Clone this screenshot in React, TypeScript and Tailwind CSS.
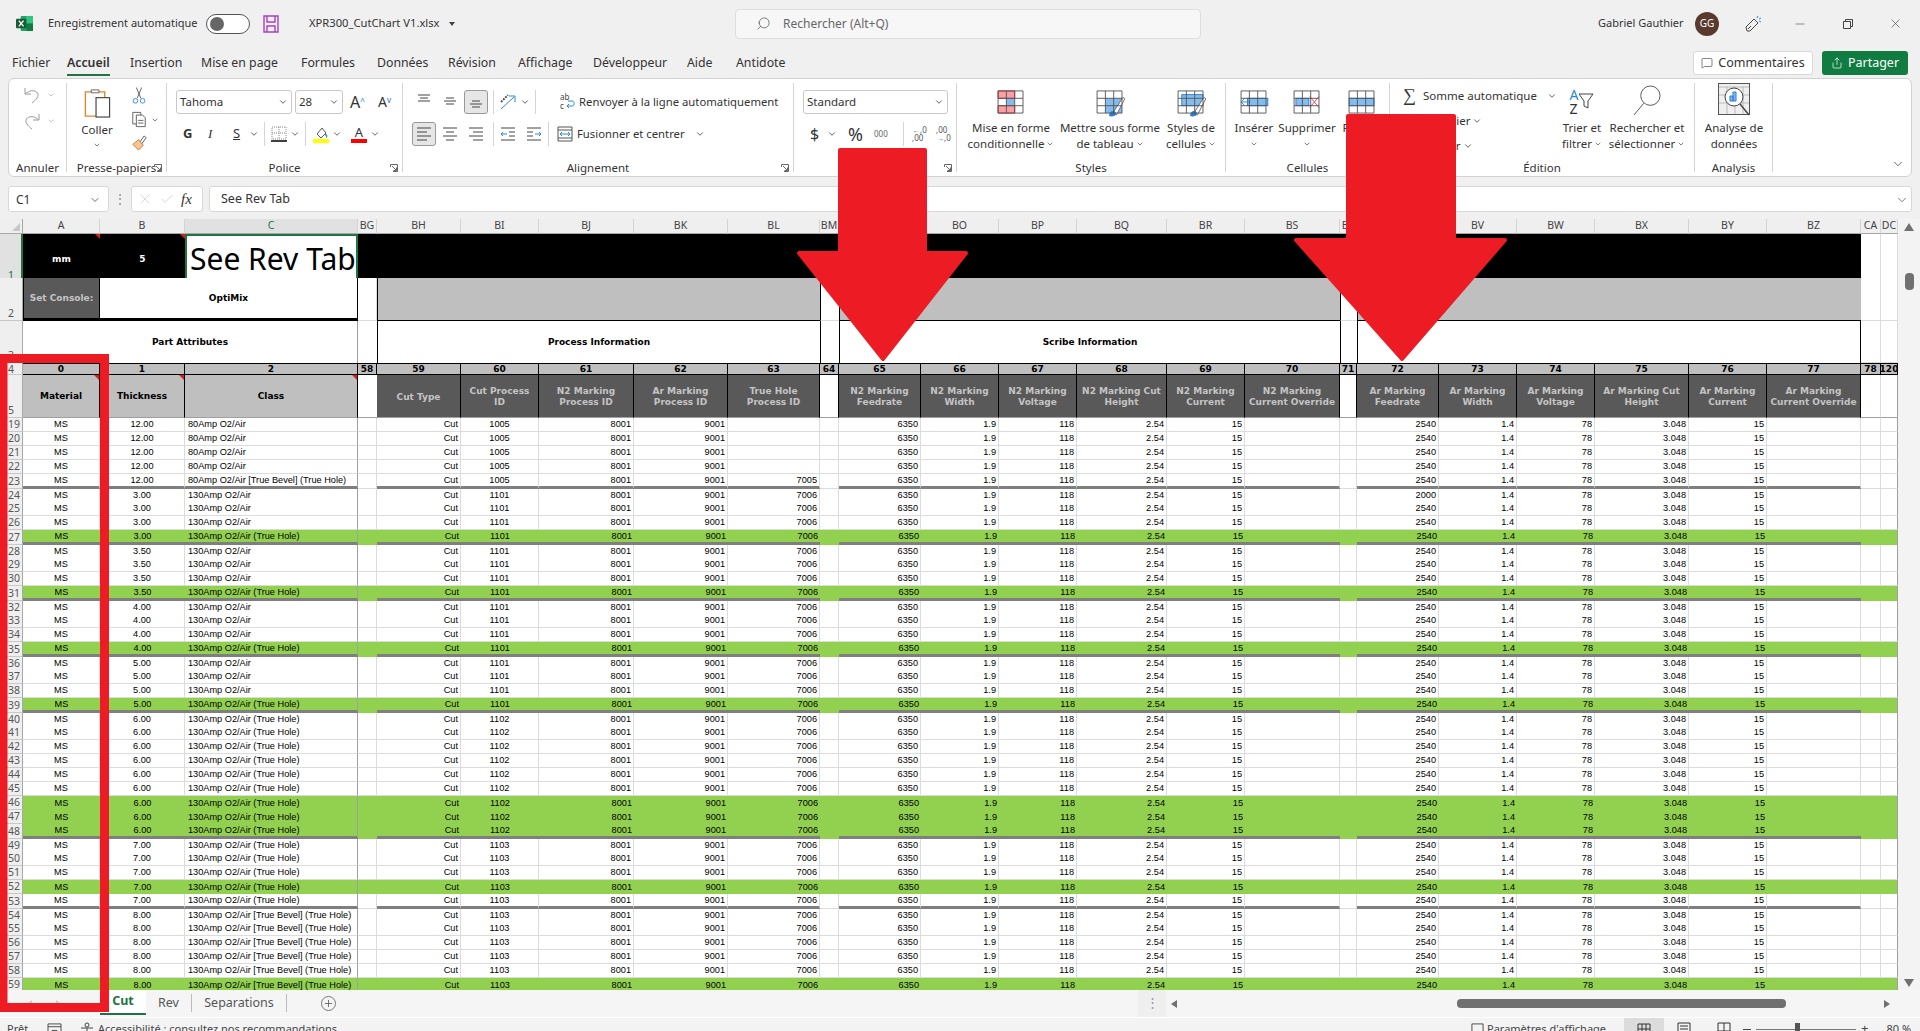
import { ChevronDown, Minus, Search, X, Check, MessageSquare, Share, Plus } from "lucide-react";
import type { ReactNode } from "react";

const GRID =
  "grid grid-cols-[23px_77px_85px_173px_19px_84px_78px_95px_94px_92px_19px_82px_78px_78px_90px_78px_95px_17px_82px_78px_78px_94px_78px_94px_20px_17px]";

const LETTERS = ["A", "B", "C", "BG", "BH", "BI", "BJ", "BK", "BL", "BM", "BN", "BO", "BP", "BQ", "BR", "BS", "BT", "BU", "BV", "BW", "BX", "BY", "BZ", "CA", "DC"];
const NUMBERS = ["0", "1", "2", "58", "59", "60", "61", "62", "63", "64", "65", "66", "67", "68", "69", "70", "71", "72", "73", "74", "75", "76", "77", "78", "120"];
const TABS = [
  ["Fichier", "w-[55px]"],
  ["Accueil", "w-[63px]"],
  ["Insertion", "w-[71px]"],
  ["Mise en page", "w-[100px]"],
  ["Formules", "w-[76px]"],
  ["Données", "w-[71px]"],
  ["Révision", "w-[70px]"],
  ["Affichage", "w-[75px]"],
  ["Développeur", "w-[94px]"],
  ["Aide", "w-[49px]"],
  ["Antidote", "w-[50px]"],
];

const HEAD_DARK = [
  ["Cut Type"],
  ["Cut Process", "ID"],
  ["N2 Marking", "Process ID"],
  ["Ar Marking", "Process ID"],
  ["True Hole", "Process ID"],
  null,
  ["N2 Marking", "Feedrate"],
  ["N2 Marking", "Width"],
  ["N2 Marking", "Voltage"],
  ["N2 Marking Cut", "Height"],
  ["N2 Marking", "Current"],
  ["N2 Marking", "Current Override"],
  null,
  ["Ar Marking", "Feedrate"],
  ["Ar Marking", "Width"],
  ["Ar Marking", "Voltage"],
  ["Ar Marking Cut", "Height"],
  ["Ar Marking", "Current"],
  ["Ar Marking", "Current Override"],
];

const O2 = "130Amp O2/Air";
const HOLE = "130Amp O2/Air (True Hole)";
const BEVEL = "130Amp O2/Air [True Bevel] (True Hole)";

type Row = { n: number; t: string; c: string; id: string; hole: string; ar?: string };

const ROWS: Row[] = [];
for (let n = 19; n <= 59; n++) {
  if (n <= 23) ROWS.push({ n, t: "12.00", c: n === 23 ? "80Amp O2/Air [True Bevel] (True Hole)" : "80Amp O2/Air", id: "1005", hole: n === 23 ? "7005" : "" });
  else if (n <= 39) {
    const g = Math.floor((n - 24) / 4);
    ROWS.push({ n, t: ["3.00", "3.50", "4.00", "5.00"][g], c: (n - 24) % 4 === 3 ? HOLE : O2, id: "1101", hole: "7006", ar: n === 24 ? "2000" : "2540" });
  } else if (n <= 48) ROWS.push({ n, t: "6.00", c: HOLE, id: "1102", hole: "7006" });
  else if (n <= 53) ROWS.push({ n, t: "7.00", c: HOLE, id: "1103", hole: "7006" });
  else ROWS.push({ n, t: "8.00", c: BEVEL, id: "1103", hole: "7006" });
}

const GREEN = [27, 31, 35, 39, 46, 47, 48, 52, 59];
const THICK = [23, 27, 31, 35, 39, 48, 53];
const AFTER_THICK = [24, 28, 32, 36, 40, 49, 54, 59];

const Chev = ({ className = "" }: { className?: string }) => (
  <ChevronDown className={"w-[10px] h-[10px] text-[#444] shrink-0 " + className} strokeWidth={2} />
);

const Launcher = () => (
  <svg viewBox="0 0 10 10" className="absolute right-[3px] bottom-[-1px] w-[10px] h-[10px]" fill="none" stroke="#666">
    <path d="M1.5 4V1.5H8.5V8.5H4M3 3L7.5 7.5M7.5 4.5V7.5H4.5" />
  </svg>
);

function Group({ w, label, launcher, children }: { w: string; label: string; launcher?: boolean; children: ReactNode }) {
  return (
    <div className={"relative mt-[4px] h-[89px] flex flex-col border-r border-[#d4d4d4] shrink-0 " + w}>
      <div className="h-[77px] shrink-0 flex">{children}</div>
      <div className="h-[16px] leading-[16px] text-center text-[11.5px] text-[#333] whitespace-nowrap">{label}</div>
      {launcher && <Launcher />}
    </div>
  );
}

function BigBtn({ w, icon, lines, chev, below }: { w: string; icon: ReactNode; lines: string[]; chev?: boolean; below?: boolean }) {
  return (
    <div className={"flex flex-col items-center shrink-0 " + w}>
      <div className="h-[37px] flex items-end justify-center">{icon}</div>
      {lines.map((l, i) => (
        <div key={l} className="h-[16px] leading-[16px] text-[11.5px] text-[#333] whitespace-nowrap flex items-center gap-[2px]">
          {l}
          {chev && i === lines.length - 1 && <Chev className="!w-[8px] !h-[8px]" />}
        </div>
      ))}
      {below && <Chev className="mt-[4px] !w-[8px] !h-[8px]" />}
    </div>
  );
}

const Lines = ({ kind }: { kind: string }) => {
  const d: Record<string, string> = {
    top: "M3 2H15M5 5H13M3 8H15",
    mid: "M5 5H13M3 8H15M5 11H13",
    bot: "M5 8H13M3 11H15M5 14H13",
    left: "M2 3H16M2 7H12M2 11H16M2 15H12",
    center: "M2 3H16M5 7H13M2 11H16M5 15H13",
    right: "M2 3H16M6 7H16M2 11H16M6 15H16",
  };
  return (
    <svg viewBox="0 0 18 18" className="w-[18px] h-[18px]" fill="none" stroke="#444" strokeWidth="1">
      <path d={d[kind]} />
    </svg>
  );
};

const TableIcon = ({ children }: { children?: ReactNode }) => (
  <svg viewBox="0 0 30 26" className="mb-[6px] w-[28px] h-[24px] overflow-visible" fill="none">
    {children}
    <path d="M1 1H28V25H1ZM1 9H28M1 17H28M10 1V25M19 1V25" stroke="#555" strokeWidth="1" />
  </svg>
);

const Brush = () => (
  <g>
    <path d="M18 25L29 8L31 9.5L22 27Z" fill="#fff" stroke="#666" />
    <path d="M14 28C14 24 17 22 20 23C22 24 22 27 20 28C18 29 15 29 14 28Z" fill="#2b7cd3" />
  </g>
);

function Cell({ className = "", children }: { className?: string; children?: ReactNode }) {
  return <div className={"relative flex items-center overflow-hidden whitespace-nowrap " + className}>{children}</div>;
}

const Flag = () => (
  <span className="absolute top-0 right-0 w-0 h-0 border-t-[5px] border-l-[5px] border-t-[#e01b1b] border-l-transparent" />
);

function RowHead({ h, n, active }: { h?: string; n: string; active?: boolean }) {
  return (
    <div
      className={
        "flex items-end pl-[8px] text-[10.5px] leading-[13px] border-b border-[#c8c8c8] " +
        (active ? "bg-[#e1e1e1] text-[#217346] border-r-2 border-r-[#217346]" : "bg-[#efefef] text-[#555] border-r border-r-[#a8a8a8] ") +
        (h ?? "")
      }
    >
      {n}
    </div>
  );
}

function DataRow({ r }: { r: Row }) {
  const green = GREEN.includes(r.n);
  const thick = THICK.includes(r.n);
  const gap = AFTER_THICK.includes(r.n);
  const vals: [string, string][] = [
    ["MS", "c"],
    [r.t, "c"],
    [r.c, "l"],
    ["", "r"],
    ["Cut", "r"],
    [r.id, "c"],
    ["8001", "r"],
    ["9001", "r"],
    [r.hole, "r"],
    ["", "r"],
    ["6350", "r"],
    ["1.9", "r"],
    ["118", "r"],
    ["2.54", "r"],
    ["15", "r"],
    ["", "r"],
    ["", "r"],
    [r.ar ?? "2540", "r"],
    ["1.4", "r"],
    ["78", "r"],
    ["3.048", "r"],
    ["15", "r"],
    ["", "r"],
    ["", "r"],
    ["", "r"],
  ];
  const spacer = [3, 9, 16, 23, 24];
  return (
    <div className={GRID + (thick ? " h-[15px]" : gap ? " h-[13px]" : " h-[14px]")}>
      <RowHead n={String(r.n)} h="!leading-[13px] !items-center" />
      {vals.map(([v, a], i) => {
        const bottom = thick && !spacer.includes(i) ? "border-b-[3px] border-b-[#7f7f7f]" : green ? "" : "border-b border-b-[#dcdcdc]";
        const right = i === 2 || i === 24 ? "border-r border-r-[#a0a0a0]" : green ? "" : "border-r border-r-[#dcdcdc]";
        const align = a === "c" ? "justify-center" : a === "l" ? "pl-[3px]" : "justify-end pr-[2px]";
        return (
          <Cell key={i} className={`${green ? "bg-[#92d050]" : "bg-white"} ${bottom} ${right} ${align} pt-[1px] font-['Liberation_Sans',sans-serif] text-[9.2px] text-black`}>
            {v}
          </Cell>
        );
      })}
    </div>
  );
}

const BOLD = "font-['DejaVu_Sans',sans-serif] font-bold text-[9px] pt-[2px]";
const EMPTY = "bg-white border-r border-b border-[#dcdcdc]";

function Sheet() {
  return (
    <div className="w-[1898px] h-[771px] overflow-hidden shrink-0">
      <div className={GRID + " h-[15px] bg-[#efefef]"}>
        <div className="flex items-end justify-end pr-[2px] pb-[2px] border-r border-b border-[#a8a8a8]">
          <span className="w-0 h-0 border-b-[8px] border-l-[8px] border-b-[#c8c8c8] border-l-transparent" />
        </div>
        {LETTERS.map((l) => (
          <div
            key={l}
            className={
              "flex items-center justify-center text-[10.5px] border-b border-r border-b-[#a8a8a8] border-r-[#d4d4d4] overflow-hidden " +
              (l === "C" ? "bg-[#e1e1e1] text-[#217346]" : "text-[#444]")
            }
          >
            {l}
          </div>
        ))}
      </div>

      <div className={GRID + " h-[44px]"}>
        <RowHead n="1" active />
        <Cell className={`bg-black text-white justify-center ${BOLD}`}>
          mm
          <Flag />
        </Cell>
        <Cell className={`bg-black text-white justify-center ${BOLD}`}>
          5
          <Flag />
        </Cell>
        <Cell className="bg-white border-2 border-[#217346] pl-[3px] text-[30px] text-black !overflow-visible font-['Noto_Sans',sans-serif]">
          See Rev Tab
          <span className="absolute right-[-3px] bottom-[-3px] w-[5px] h-[5px] bg-[#217346] border border-white" />
        </Cell>
        <div className="col-span-[20] bg-black" />
        <div className={EMPTY} />
        <div className={EMPTY} />
      </div>

      <div className={GRID + " h-[43px]"}>
        <RowHead n="2" />
        <Cell className={`bg-[#595959] text-[#c4c4c4] justify-center border-r border-black border-b-[3px] border-b-black border-l border-l-black ${BOLD}`}>Set Console:</Cell>
        <Cell className={`col-span-2 bg-white text-black justify-center border-r border-black border-b-[3px] ${BOLD}`}>OptiMix</Cell>
        <div className={EMPTY} />
        <div className="col-span-5 bg-[#bfbfbf] border-b border-black border-l border-l-black" />
        <div className="bg-white border-l border-l-black border-b border-[#dcdcdc]" />
        <div className="col-span-6 bg-[#bfbfbf] border-b border-black border-l border-l-black" />
        <div className="bg-white border-l border-l-black border-b border-[#dcdcdc]" />
        <div className="col-span-6 bg-[#bfbfbf] border-b border-black border-l border-l-black" />
        <div className={EMPTY} />
        <div className={EMPTY} />
      </div>

      <div className={GRID + " h-[42px]"}>
        <RowHead n="3" />
        <Cell className={`col-span-3 bg-white text-black justify-center border-r border-r-[#a0a0a0] ${BOLD}`}>Part Attributes</Cell>
        <div className="bg-white" />
        <Cell className={`col-span-5 bg-white text-black justify-center border-l border-l-black ${BOLD}`}>Process Information</Cell>
        <div className="bg-white border-l border-l-black" />
        <Cell className={`col-span-6 bg-white text-black justify-center border-l border-l-black ${BOLD}`}>Scribe Information</Cell>
        <div className="bg-white border-l border-l-black" />
        <div className="col-span-6 bg-white border-l border-l-black border-r border-r-black" />
        <div className={EMPTY} />
        <div className={EMPTY} />
      </div>

      <div className={GRID + " h-[12px]"}>
        <RowHead n="4" h="!items-center !leading-[10px]" />
        {NUMBERS.map((n) => (
          <Cell key={n} className={`bg-[#bfbfbf] text-black justify-center border-t border-b border-r border-black ${BOLD}`}>
            {n}
          </Cell>
        ))}
      </div>

      <div className={GRID + " h-[43px]"}>
        <RowHead n="5" />
        {["Material", "Thickness", "Class"].map((l) => (
          <Cell key={l} className={`bg-[#bfbfbf] text-black justify-center border-r border-black border-b border-b-[#a0a0a0] ${BOLD}`}>
            {l}
            <Flag />
          </Cell>
        ))}
        <div className="bg-white border-b border-[#a0a0a0]" />
        {HEAD_DARK.map((h, i) =>
          h ? (
            <div key={i} className={`flex flex-col items-center justify-center bg-[#595959] text-[#c4c4c4] border-r border-black border-l-0 border-b border-b-[#a0a0a0] leading-[11px] overflow-hidden whitespace-nowrap ${BOLD}`}>
              {h.map((t) => (
                <span key={t}>{t}</span>
              ))}
            </div>
          ) : (
            <div key={i} className="bg-white border-r border-r-black border-b border-b-[#a0a0a0]" />
          )
        )}
        <div className="bg-white border-r border-b border-r-[#dcdcdc] border-b-[#a0a0a0]" />
        <div className="bg-white border-r border-b border-r-[#a0a0a0] border-b-[#a0a0a0]" />
      </div>

      {ROWS.map((r) => (
        <DataRow key={r.n} r={r} />
      ))}
    </div>
  );
}

function TitleBar() {
  return (
    <div className="h-[47px] flex items-center text-[12px] text-[#333]">
      <svg viewBox="0 0 18 18" className="ml-[16px] w-[17px] h-[17px]">
        <rect x="5" y="1" width="13" height="16" rx="1" fill="#21a366" />
        <rect x="11" y="1" width="7" height="8" fill="#33c481" />
        <rect x="11" y="9" width="7" height="8" fill="#107c41" />
        <rect x="0" y="4" width="11" height="10" rx="1" fill="#185c37" />
        <path d="M3 6L8 12M8 6L3 12" stroke="#fff" strokeWidth="1.4" />
      </svg>
      <span className="ml-[15px] w-[150px] whitespace-nowrap text-[11px]">Enregistrement automatique</span>
      <div className="ml-[8px] w-[44px] h-[20px] rounded-full border border-[#555] bg-white flex items-center pl-[3px]">
        <span className="w-[14px] h-[14px] rounded-full bg-[#666]" />
      </div>
      <svg viewBox="0 0 18 18" className="ml-[12px] w-[18px] h-[18px]" fill="none" stroke="#a742c0" strokeWidth="1.4">
        <path d="M2 1H16V17H2Z" />
        <path d="M5 1V7H13V1M5 17V11H13V17" />
      </svg>
      <span className="ml-[29px] w-[132px] whitespace-nowrap text-[11.2px]">XPR300_CutChart V1.xlsx</span>
      <span className="ml-[8px] w-0 h-0 border-x-[3px] border-t-[4px] border-x-transparent border-t-[#444]" />
      <div className="ml-[280px] w-[466px] h-[30px] rounded-[4px] border border-[#dedede] bg-[#f7f7f7] flex items-center pl-[20px] text-[#666]">
        <Search className="w-[15px] h-[15px] -scale-x-100 text-[#555]" strokeWidth={1.2} />
        <span className="ml-[12px]">Rechercher (Alt+Q)</span>
      </div>
      <span className="ml-[397px] whitespace-nowrap w-[86px] text-[11px]">Gabriel Gauthier</span>
      <div className="ml-[11px] w-[24px] h-[24px] rounded-full bg-[#5b3a2e] text-white text-[10px] flex items-center justify-center">GG</div>
      <svg viewBox="0 0 20 20" className="ml-[24px] w-[20px] h-[20px]" fill="none" stroke="#444">
        <path d="M4 17L3 13L11 5L15 9L7 17Z M5 15L8 12" />
        <path d="M15 2L14 4M18 4L16 5M18 8L16 7" stroke="#2b88d8" />
      </svg>
      <Minus className="ml-[30px] w-[14px] h-[14px] text-[#444]" strokeWidth={1} />
      <svg viewBox="0 0 12 12" className="ml-[35px] w-[12px] h-[12px]" fill="none" stroke="#444">
        <path d="M1.5 3.5H8.5V10.5H1.5ZM3.5 3.5V1.5H10.5V8.5H8.5" />
      </svg>
      <X className="ml-[34px] w-[15px] h-[15px] text-[#444]" strokeWidth={1} />
    </div>
  );
}

function TabBar() {
  return (
    <div className="h-[31px] flex items-start text-[12.3px] text-[#333]">
      <div className="flex pl-[12px] w-[1693px]">
        {TABS.map(([t, w]) => (
          <div key={t} className={"shrink-0 " + w}>
            <span className={"relative inline-block h-[26px] leading-[32px] whitespace-nowrap " + (t === "Accueil" ? "font-semibold" : "")}>
              {t}
              {t === "Accueil" && <span className="absolute left-0 right-0 bottom-[-3px] h-[2px] bg-[#217346]" />}
            </span>
          </div>
        ))}
      </div>
      <div className="w-[120px] h-[24px] mt-[4px] rounded-[3px] border border-[#d8d8d8] bg-white flex items-center justify-center gap-[5px] text-[#333] text-[12.5px]">
        <MessageSquare className="w-[12px] h-[12px]" strokeWidth={1.2} />
        Commentaires
      </div>
      <div className="ml-[9px] w-[86px] h-[24px] mt-[4px] rounded-[3px] bg-[#107c41] text-white flex items-center justify-center gap-[5px] text-[12.5px]">
        <Share className="w-[12px] h-[12px]" strokeWidth={1.4} />
        Partager
      </div>
    </div>
  );
}

const Row24 = ({ children, className = "" }: { children: ReactNode; className?: string }) => (
  <div className={"h-[24px] flex items-center " + className}>{children}</div>
);

const Sep = () => <span className="mx-[5px] w-px h-[24px] bg-[#d4d4d4] shrink-0" />;

function Ribbon() {
  return (
    <div className="mx-[8px] h-[99px] rounded-[6px] border border-[#d2d2d2] bg-white flex text-[#333]">
      <Group w="w-[58px]" label="Annuler">
        <div className="flex flex-col pl-[14px] pt-[2px] gap-[6px] text-[#aaa]">
          {[0, 1].map((i) => (
            <div key={i} className="h-[20px] flex items-center gap-[6px]">
              <svg viewBox="0 0 18 18" className={"w-[18px] h-[18px] " + (i ? "-scale-x-100" : "")} fill="none" stroke="#9a9a9a">
                <path d="M2 2V8H8M2.5 8C6 4 12 3.5 14.5 7C16.5 10 13 14 9 17" />
              </svg>
              <Chev className="!text-[#aaa] !w-[8px] !h-[8px]" />
            </div>
          ))}
        </div>
      </Group>

      <Group w="w-[100px]" label="Presse-papiers" launcher>
        <div className="flex pl-[15px]">
          <div className="flex flex-col items-center w-[30px]">
            <svg viewBox="0 0 28 32" className="mt-[4px] w-[28px] h-[31px]" fill="none">
              <path d="M2 5H22V30H2Z" stroke="#d8882c" strokeWidth="1.4" />
              <path d="M8 6V3H16V6H8Z" fill="#fff" stroke="#666" />
              <rect x="13" y="11" width="14" height="20" fill="#fff" stroke="#444" strokeWidth="1.2" />
            </svg>
            <span className="mt-[4px] text-[11.5px] leading-[16px]">Coller</span>
            <Chev className="mt-[3px] !w-[8px] !h-[8px]" />
          </div>
          <div className="ml-[19px] flex flex-col pt-[3px] gap-[5px]">
            <svg viewBox="0 0 18 20" className="w-[16px] h-[19px]" fill="none" stroke="#555">
              <path d="M6 1L11 13M12 1L7 13" />
              <circle cx="5" cy="16" r="2.6" stroke="#2b88d8" />
              <circle cx="13" cy="16" r="2.6" stroke="#2b88d8" />
            </svg>
            <div className="flex items-center gap-[4px] -mr-[12px]">
              <svg viewBox="0 0 18 20" className="w-[16px] h-[19px]" fill="white" stroke="#555">
                <path d="M2 2H11V15H2Z" />
                <path d="M6 5H13L16 8V18H6Z" />
                <path d="M8 11H14M8 14H14" />
              </svg>
              <Chev className="!w-[8px] !h-[8px]" />
            </div>
            <svg viewBox="0 0 18 18" className="w-[17px] h-[17px]" fill="none">
              <path d="M9 9L14 2L16 4L11 11Z" stroke="#555" />
              <path d="M2 11L8 6L13 12L8 17Z" fill="#f5c49a" stroke="#d8782c" />
            </svg>
          </div>
        </div>
      </Group>

      <Group w="w-[236px]" label="Police" launcher>
        <div className="flex flex-col gap-[8px] pt-[7px] pl-[9px]">
          <Row24>
            <div className="w-[116px] h-[24px] rounded-[3px] border border-[#c8c8c8] flex items-center justify-between px-[3px] text-[11.5px]">
              Tahoma
              <Chev />
            </div>
            <div className="ml-[3px] w-[48px] h-[24px] rounded-[3px] border border-[#c8c8c8] flex items-center justify-between px-[3px] text-[11.5px]">
              28
              <Chev />
            </div>
            <span className="ml-[7px] w-[26px] text-[16px] leading-none">
              A<sup className="text-[8px] text-[#2b6cb0]">^</sup>
            </span>
            <span className="ml-[2px] text-[14px] leading-none">
              A<sup className="text-[8px] text-[#2b6cb0]">v</sup>
            </span>
          </Row24>
          <Row24 className="pl-[7px]">
            <span className="w-[25px] font-bold text-[13px]">G</span>
            <span className="w-[25px] italic text-[13px] font-['Liberation_Serif',serif]">I</span>
            <span className="w-[16px] underline text-[13px]">S</span>
            <Chev />
            <Sep />
            <svg viewBox="0 0 16 16" className="ml-[1px] w-[16px] h-[16px]" fill="none">
              <path d="M1 1H15V13H1ZM8 1V13M1 7H15" stroke="#888" strokeDasharray="1 1" />
              <path d="M0 15H16" stroke="#111" strokeWidth="1.6" />
            </svg>
            <Chev className="ml-[3px]" />
            <Sep />
            <svg viewBox="0 0 16 18" className="ml-[2px] w-[16px] h-[18px]" fill="none">
              <path d="M4 9L9 3L13 8L8 13Z" stroke="#555" />
              <path d="M12 10C14 9 14 12 13 12" stroke="#2b88d8" strokeWidth="1.4" />
              <rect x="0" y="14" width="16" height="4" fill="#ffff00" />
            </svg>
            <Chev className="ml-[3px]" />
            <span className="ml-[9px] w-[16px] flex flex-col items-center text-[13px] leading-[14px]">
              A
              <span className="w-[16px] h-[4px] bg-[#ff0000]" />
            </span>
            <Chev className="ml-[3px]" />
          </Row24>
        </div>
      </Group>

      <Group w="w-[391px]" label="Alignement" launcher>
        <div className="flex flex-col gap-[8px] pt-[7px] pl-[9px]">
          <Row24>
            <span className="w-[24px] flex justify-center"><Lines kind="top" /></span>
            <span className="ml-[2px] w-[24px] flex justify-center"><Lines kind="mid" /></span>
            <span className="ml-[2px] w-[24px] h-[24px] flex items-center justify-center rounded-[3px] border border-[#999] bg-[#e6e6e6]"><Lines kind="bot" /></span>
            <Sep />
            <svg viewBox="0 0 18 18" className="w-[18px] h-[18px]" fill="none">
              <path d="M2 9L9 2" stroke="#555" strokeWidth="2" strokeDasharray="2 1" />
              <path d="M2 16L15 4M10 3H16V9" stroke="#2b88d8" />
            </svg>
            <Chev className="ml-[3px]" />
            <Sep />
            <svg viewBox="0 0 18 18" className="ml-[18px] w-[18px] h-[18px]" fill="none">
              <text x="1" y="7" fontSize="8" fill="#444" stroke="none">ab</text>
              <text x="1" y="16" fontSize="8" fill="#444" stroke="none">c</text>
              <path d="M8 13H13C16 13 16 8 13 8H9M10 15L8 13L10 11" stroke="#2b88d8" />
            </svg>
            <span className="ml-[2px] text-[11.3px] whitespace-nowrap">Renvoyer à la ligne automatiquement</span>
          </Row24>
          <Row24>
            <span className="w-[24px] h-[24px] flex items-center justify-center rounded-[3px] border border-[#999] bg-[#e6e6e6]"><Lines kind="left" /></span>
            <span className="ml-[2px] w-[24px] flex justify-center"><Lines kind="center" /></span>
            <span className="ml-[2px] w-[24px] flex justify-center"><Lines kind="right" /></span>
            <Sep />
            <svg viewBox="0 0 18 18" className="w-[18px] h-[18px]" fill="none" stroke="#444">
              <path d="M2 3H16M10 7H16M10 11H16M2 15H16" />
              <path d="M8 9H2M4 7L2 9L4 11" stroke="#2b88d8" />
            </svg>
            <svg viewBox="0 0 18 18" className="ml-[8px] w-[18px] h-[18px]" fill="none" stroke="#444">
              <path d="M2 3H16M2 7H8M2 11H8M2 15H16" />
              <path d="M10 9H16M14 7L16 9L14 11" stroke="#2b88d8" />
            </svg>
            <Sep />
            <svg viewBox="0 0 16 16" className="ml-[3px] w-[16px] h-[16px]" fill="none" stroke="#555">
              <path d="M1 1H15V15H1ZM1 4H15M1 12H15" />
              <path d="M3 8H13M5 6L3 8L5 10M11 6L13 8L11 10" stroke="#2b88d8" />
            </svg>
            <span className="ml-[4px] text-[11.3px] whitespace-nowrap">Fusionner et centrer</span>
            <Chev className="ml-[10px]" />
          </Row24>
        </div>
      </Group>

      <Group w="w-[163px]" label="Nombre" launcher>
        <div className="flex flex-col gap-[8px] pt-[7px] pl-[9px]">
          <Row24>
            <div className="w-[145px] h-[24px] rounded-[3px] border border-[#c8c8c8] flex items-center justify-between px-[3px] text-[11.5px]">
              Standard
              <Chev />
            </div>
          </Row24>
          <Row24 className="pl-[7px]">
            <span className="w-[17px] text-[16px]">$</span>
            <Chev />
            <span className="ml-[11px] w-[26px] text-[18px]">%</span>
            <span className="w-[24px] text-[8px] text-[#666]">000</span>
            <Sep />
            <span className="ml-[3px] w-[24px] text-[8px] leading-[8px] text-[#555]">
              <span className="text-[#2b88d8]">←</span>,0
              <br />
              ,00
            </span>
            <span className="text-[8px] leading-[8px] text-[#555]">
              ,00
              <br />
              <span className="text-[#2b88d8]">→</span>,0
            </span>
          </Row24>
        </div>
      </Group>

      <Group w="w-[269px]" label="Styles">
        <div className="flex pl-[10px]">
          <BigBtn
            w="w-[88px]"
            lines={["Mise en forme", "conditionnelle"]}
            chev
            icon={
              <TableIcon>
                <rect x="1" y="1" width="18" height="8" fill="#f7a1a6" />
                <rect x="1" y="17" width="18" height="8" fill="#f7a1a6" />
                <rect x="10" y="9" width="9" height="8" fill="#83bdf0" />
                <path d="M1 1H19V9H1ZM1 17H19V25H1Z" stroke="#d9262e" />
              </TableIcon>
            }
          />
          <BigBtn
            w="w-[110px]"
            lines={["Mettre sous forme", "de tableau"]}
            chev
            icon={
              <TableIcon>
                <rect x="10" y="9" width="18" height="16" fill="#83bdf0" />
                <Brush />
              </TableIcon>
            }
          />
          <BigBtn
            w="w-[52px]"
            lines={["Styles de", "cellules"]}
            chev
            icon={
              <TableIcon>
                <rect x="5" y="5" width="23" height="12" fill="#83bdf0" stroke="#2b7cd3" />
                <Brush />
              </TableIcon>
            }
          />
        </div>
      </Group>

      <Group w="w-[164px]" label="Cellules">
        <BigBtn
          w="ml-[3px] w-[50px]"
          lines={["Insérer"]}
          below
          icon={
            <TableIcon>
              <rect x="8" y="9" width="22" height="8" fill="#83bdf0" stroke="#2b7cd3" />
              <path d="M11 13H1M5 9L1 13L5 17" stroke="#2b88d8" />
            </TableIcon>
          }
        />
        <BigBtn
          w="w-[56px]"
          lines={["Supprimer"]}
          below
          icon={
            <TableIcon>
              <rect x="3" y="9" width="14" height="8" fill="#83bdf0" stroke="#2b7cd3" />
              <path d="M18 7L28 19M28 7L18 19" stroke="#e8434b" />
            </TableIcon>
          }
        />
        <BigBtn
          w="w-[54px]"
          lines={["Format"]}
          below
          icon={
            <TableIcon>
              <rect x="1" y="9" width="27" height="8" fill="#83bdf0" stroke="#2b7cd3" />
            </TableIcon>
          }
        />
      </Group>

      <Group w="w-[305px]" label="Édition">
        <div className="w-[175px] flex flex-col pl-[13px] text-[11.5px]">
          <div className="h-[25px] flex items-center whitespace-nowrap">
            <span className="w-[20px] text-[18px] font-['Liberation_Serif',serif]">∑</span>
            Somme automatique
            <Chev className="ml-[10px]" />
          </div>
          <div className="h-[25px] flex items-center pl-[20px] gap-[2px]">
            Recopier
            <Chev />
          </div>
          <div className="h-[25px] flex items-center pl-[20px] gap-[2px]">
            Effacer
            <Chev />
          </div>
        </div>
        <BigBtn
          w="w-[36px]"
          lines={["Trier et", "filtrer"]}
          chev
          icon={
            <span className="flex items-end mb-[4px]">
              <span className="flex flex-col text-[14px] leading-[14px]">
                <span className="text-[#2b88d8]">A</span>
                <span>Z</span>
              </span>
              <svg viewBox="0 0 16 18" className="w-[16px] h-[18px] mb-[6px]" fill="none" stroke="#444">
                <path d="M1 2H15L10 9V16L6 14V9Z" />
              </svg>
            </span>
          }
        />
        <BigBtn
          w="w-[94px]"
          lines={["Rechercher et", "sélectionner"]}
          chev
          icon={
            <svg viewBox="0 0 30 32" className="mb-[4px] w-[29px] h-[31px]" fill="none" stroke="#555">
              <circle cx="18" cy="11" r="10" />
              <path d="M11 19L1 31" />
            </svg>
          }
        />
      </Group>

      <Group w="w-[78px]" label="Analysis">
        <BigBtn
          w="w-[78px]"
          lines={["Analyse de", "données"]}
          icon={
            <svg viewBox="0 0 32 34" className="mb-[3px] w-[32px] h-[34px]" fill="none">
              <rect x="0.5" y="0.5" width="31" height="31" fill="#efefef" stroke="#555" />
              <path d="M1 4H31M1 12H31M1 20H31M9 4V31M17 4V31M25 4V31" stroke="#bbb" />
              <circle cx="16" cy="14" r="9" fill="#fff" stroke="#444" />
              <path d="M12 18V13H15V18ZM15 18V9H18V18Z" fill="#83bdf0" stroke="#2b7cd3" />
              <path d="M22 21L31 32" stroke="#444" strokeWidth="1.4" />
            </svg>
          }
        />
      </Group>

      <div className="flex-1 flex items-end justify-end pr-[6px] pb-[5px]">
        <ChevronDown className="w-[14px] h-[14px] text-[#444]" strokeWidth={1.4} />
      </div>
    </div>
  );
}

function FormulaBar() {
  return (
    <div className="mt-[9px] h-[26px] flex items-center px-[8px] text-[12px] text-[#333]">
      <div className="w-[101px] h-[26px] rounded-[3px] border border-[#d8d8d8] bg-white flex items-center justify-between pt-[1px] px-[7px]">
        C1
        <ChevronDown className="w-[12px] h-[12px] text-[#444]" strokeWidth={1.6} />
      </div>
      <span className="w-[22px] text-center text-[#888] leading-none">⋮</span>
      <div className="w-[72px] h-[26px] rounded-[3px] border border-[#d8d8d8] bg-white flex items-center px-[5px] gap-[6px]">
        <X className="w-[16px] h-[16px] text-[#c4c4c4]" strokeWidth={1} />
        <Check className="w-[16px] h-[16px] text-[#c4c4c4]" strokeWidth={1} />
        <span className="italic font-['Liberation_Serif',serif] text-[15px] text-[#333]">fx</span>
      </div>
      <div className="ml-[6px] flex-1 h-[26px] rounded-[3px] border border-[#d8d8d8] bg-white flex items-center justify-between pt-[1px] pl-[11px] pr-[2px] text-[12.5px]">
        See Rev Tab
        <ChevronDown className="w-[14px] h-[14px] text-[#444]" strokeWidth={1.2} />
      </div>
    </div>
  );
}

const Tri = ({ d, className = "" }: { d: string; className?: string }) => (
  <svg viewBox="0 0 10 10" className={"w-[10px] h-[10px] shrink-0 " + className} fill="#707070">
    <path d={d} />
  </svg>
);

function VScroll() {
  return (
    <div className="w-[22px] h-[771px] flex flex-col items-center bg-[#f3f3f3]">
      <Tri d="M5 1L10 9H0Z" className="mt-[3px]" />
      <div className="mt-[41px] w-[9px] h-[17px] rounded-[4px] bg-[#707070]" />
      <Tri d="M5 9L10 1H0Z" className="mt-auto mb-[2px]" />
    </div>
  );
}

function SheetTabs() {
  return (
    <div className="h-[28px] flex bg-[#f5f5f5] border-b border-white text-[#555] text-[12.5px]">
      <div className="w-[100px] flex items-center pl-[24px] gap-[20px]">
        <Tri d="M2 5L8 1V9Z" className="opacity-30" />
        <Tri d="M8 5L2 1V9Z" className="opacity-30" />
      </div>
      <div className="w-[46px] h-[25px] bg-white border-b-2 border-[#217346] text-[#217346] font-bold flex items-center justify-center">Cut</div>
      <div className="w-[46px] h-[18px] flex items-center justify-center border-r border-[#bbb] mt-[4px]">
        <span>Rev</span>
      </div>
      <div className="w-[95px] h-[18px] flex items-center justify-center border-r border-[#bbb] mt-[4px]">
        <span>Separations</span>
      </div>
      <div className="ml-[34px] mt-[6px] w-[15px] h-[15px] rounded-full border border-[#777] flex items-center justify-center">
        <Plus className="w-[11px] h-[11px] text-[#666]" strokeWidth={2} />
      </div>
      <div className="ml-[802px] w-[28px] h-[27px] bg-[#efefef] flex items-center justify-center text-[#999] leading-none">⋮</div>
      <Tri d="M2 5L8 1V9Z" className="ml-[3px] mt-[9px]" />
      <div className="ml-[278px] mt-[9px] w-[329px] h-[9px] rounded-[4px] bg-[#707070]" />
      <Tri d="M8 5L2 1V9Z" className="ml-[96px] mt-[9px]" />
    </div>
  );
}

function StatusBar() {
  return (
    <div className="h-[22px] flex items-center bg-[#f3f3f3] pl-[7px] text-[11px] text-[#444] whitespace-nowrap">
      <span className="w-[40px]">Prêt</span>
      <svg viewBox="0 0 16 14" className="w-[15px] h-[13px]" fill="none" stroke="#444">
        <path d="M1 1H15V13H1ZM1 4H15M5 8H11M5 10H11" />
      </svg>
      <svg viewBox="0 0 14 14" className="ml-[18px] w-[14px] h-[14px]" fill="none" stroke="#444">
        <circle cx="7" cy="3" r="2" />
        <path d="M1 6H13M7 6V9M4 13L7 9L10 13" />
      </svg>
      <span className="ml-[4px] w-[1373px]">Accessibilité : consultez nos recommandations</span>
      <svg viewBox="0 0 14 14" className="w-[13px] h-[13px]" fill="none" stroke="#444">
        <path d="M1 1H13V13H1Z" />
      </svg>
      <span className="ml-[3px] w-[137px]">Paramètres d'affichage</span>
      <div className="w-[40px] h-[22px] bg-[#dcdcdc] flex items-center justify-center">
        <svg viewBox="0 0 14 12" className="w-[14px] h-[12px]" fill="none" stroke="#333">
          <path d="M1 1H13V11H1ZM1 6H13M5 1V11M9 1V11" />
        </svg>
      </div>
      <svg viewBox="0 0 14 14" className="ml-[13px] w-[14px] h-[14px]" fill="none" stroke="#333">
        <path d="M1 1H13V13H1ZM3 4H11M3 7H11M3 10H11" />
      </svg>
      <svg viewBox="0 0 14 14" className="ml-[26px] w-[14px] h-[14px]" fill="none" stroke="#333">
        <path d="M1 1H13V13H1ZM7 1V9M1 9H13" />
      </svg>
      <span className="ml-[12px] w-[8px] h-px bg-[#444]" />
      <div className="relative ml-[5px] w-[100px] h-px bg-[#777]">
        <span className="absolute left-[39px] top-[-6px] w-[5px] h-[12px] bg-[#555]" />
      </div>
      <span className="ml-[5px] text-[13px]">+</span>
      <span className="ml-[18px]">80 %</span>
    </div>
  );
}

function Annotations() {
  return (
    <svg viewBox="0 0 1920 1031" className="absolute left-0 top-0 w-[1920px] h-[1031px] pointer-events-none" fill="#ed1c24">
      <rect x="3" y="358.5" width="101.5" height="649" fill="none" stroke="#ed1c24" strokeWidth="9" />
      <path d="M840 150H925V253H966L883 359L799 253H840Z" stroke="#ed1c24" strokeWidth="4" strokeLinejoin="round" />
      <path d="M1348 116H1454V240H1505L1402 359L1296 240H1348Z" stroke="#ed1c24" strokeWidth="4" strokeLinejoin="round" />
    </svg>
  );
}

export default function App() {
  return (
    <div className="relative w-[1920px] h-[1031px] overflow-hidden bg-[#f0f0f0] font-['Noto_Sans',sans-serif]">
      <TitleBar />
      <TabBar />
      <Ribbon />
      <FormulaBar />
      <div className="mt-[7px] flex">
        <Sheet />
        <VScroll />
      </div>
      <SheetTabs />
      <StatusBar />
      <Annotations />
    </div>
  );
}
